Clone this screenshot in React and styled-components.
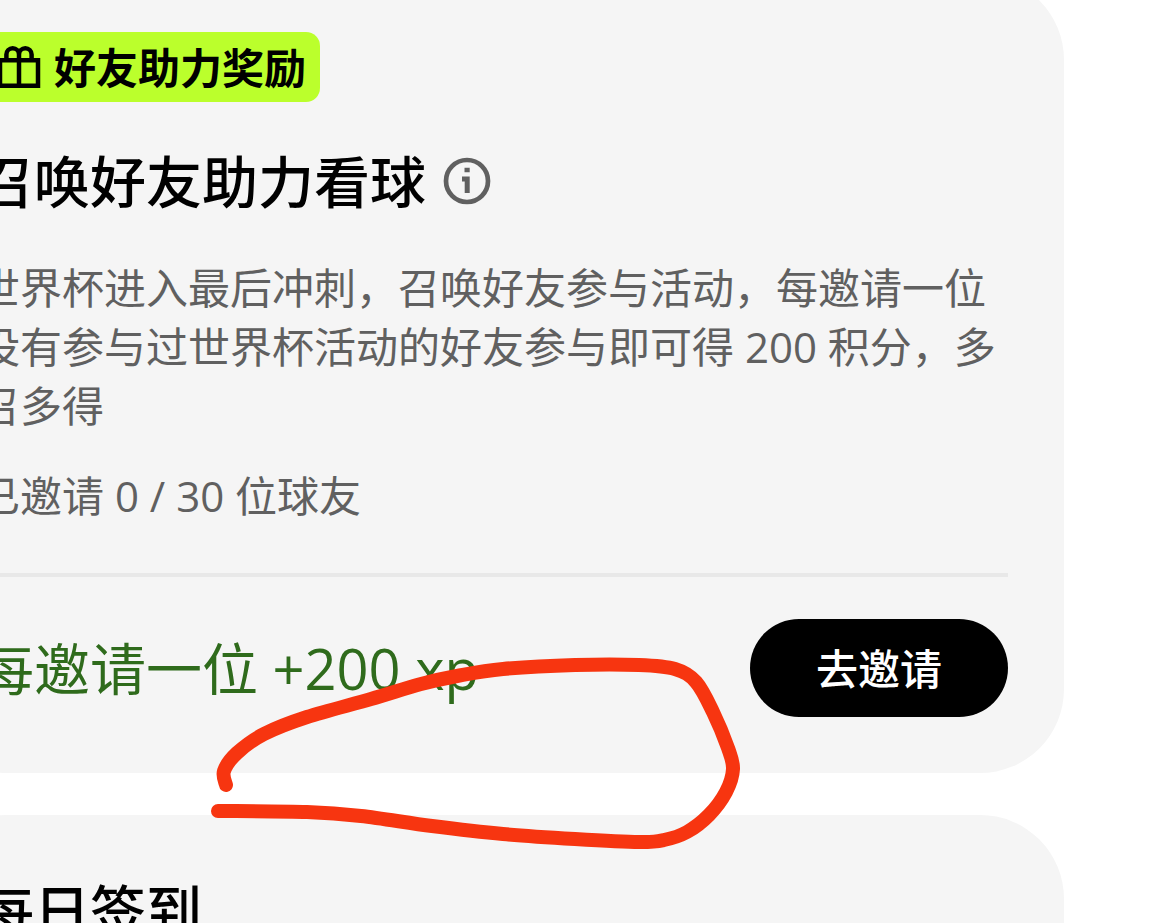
import React from 'react'
import styled, { createGlobalStyle } from 'styled-components'

const GlobalStyle = createGlobalStyle`
  body {
    margin: 0;
    background: #ffffff;
    font-family: 'Open Sans', 'Noto Sans CJK SC', sans-serif;
    overflow: hidden;
  }
`

const Page = styled.main`
  position: relative;
  height: 100vh;
  overflow: hidden;
`

const CardList = styled.div`
  display: flex;
  flex-direction: column;
  gap: 42px;
  margin: -24px 85px 0 -78px;
`

const Card = styled.section`
  padding: 56px;
  border-radius: 84px;
  background: #f5f5f5;
`

const Badge = styled.div`
  display: inline-flex;
  align-items: center;
  gap: 10px;
  height: 70px;
  padding: 0 14px;
  border-radius: 14px;
  background: #bbff2c;
  color: #000000;
  font-size: 42px;
  line-height: 59px;
  font-weight: 700;
  vertical-align: top;
`

const TitleRow = styled.div`
  display: flex;
  align-items: center;
  gap: 16px;
  margin-top: ${props => (props.$spaced ? '40px' : '0')};
`

const Title = styled.h2`
  margin: 0;
  font-size: 56px;
  line-height: 78px;
  font-weight: 500;
  color: #000000;
`

const InfoButton = styled.button`
  display: flex;
  padding: 0;
  border: 0;
  background: none;
  color: #606060;
  cursor: pointer;
`

const Text = styled.p`
  margin: ${props => props.$top}px 0 0;
  font-size: 42px;
  line-height: 59px;
  color: #606060;
`

const Footer = styled.div`
  display: flex;
  align-items: center;
  justify-content: space-between;
  margin-top: 48px;
  padding-top: 42px;
  border-top: 4px solid #e8e8e8;
`

const Reward = styled.span`
  font-size: 56px;
  line-height: 78px;
  color: #2f6b1c;
`

const InviteButton = styled.button`
  height: 98px;
  padding: 0 66px;
  border: 0;
  border-radius: 49px;
  background: #000000;
  color: #ffffff;
  font-family: inherit;
  font-size: 42px;
  line-height: 59px;
  font-weight: 500;
  cursor: pointer;
`

const Marker = styled.svg`
  position: absolute;
  top: 0;
  left: 0;
  pointer-events: none;
`

const strokePoints = [
  [226, 785], [224, 771], [237, 753], [264, 734], [307, 717], [371, 699],
  [421, 684], [457, 676], [503, 669], [575, 665], [639, 665], [675, 669],
  [696, 682], [713, 712], [728, 748], [733, 769], [726, 792], [709, 815],
  [687, 832], [664, 840], [639, 842], [575, 839], [503, 834], [432, 826],
  [361, 816], [307, 812], [218, 811],
]

// smooth curve through every point
function toPath(points) {
  let d = `M${points[0].join(' ')}`
  for (let i = 0; i < points.length - 1; i++) {
    const p0 = points[i - 1] || points[i]
    const p1 = points[i]
    const p2 = points[i + 1]
    const p3 = points[i + 2] || p2
    const c1 = [p1[0] + (p2[0] - p0[0]) / 6, p1[1] + (p2[1] - p0[1]) / 6]
    const c2 = [p2[0] - (p3[0] - p1[0]) / 6, p2[1] - (p3[1] - p1[1]) / 6]
    d += `C${c1.join(' ')} ${c2.join(' ')} ${p2.join(' ')}`
  }
  return d
}

function GiftIcon() {
  return (
    <svg width="52" height="52" viewBox="0 0 52 52" fill="none" stroke="currentColor" strokeWidth="4.5" aria-hidden="true">
      <path d="M8 19.2H46V44.7H8ZM27 18V45" />
      <path d="M14.4 19V13.5A6.3 6.3 0 0 1 27 13.5V19M27 19V13.5A6.3 6.3 0 0 1 39.6 13.5V19" />
    </svg>
  )
}

function InfoIcon() {
  return (
    <svg width="50" height="50" viewBox="0 0 50 50" fill="none" stroke="currentColor" aria-hidden="true">
      <circle cx="25" cy="25" r="21" strokeWidth="4.7" />
      <path d="M20 23H25.2V37" strokeWidth="5" />
      <path d="M22.5 14H27.7" strokeWidth="4.5" />
    </svg>
  )
}

function App() {
  return (
    <>
      <GlobalStyle />
      <Page>
        <CardList>
          <Card>
            <Badge>
              <GiftIcon />
              好友助力奖励
            </Badge>
            <TitleRow $spaced>
              <Title>召唤好友助力看球</Title>
              <InfoButton type="button" aria-label="活动说明">
                <InfoIcon />
              </InfoButton>
            </TitleRow>
            <Text $top={38}>
              世界杯进入最后冲刺，召唤好友参与活动，每邀请一位没有参与过世界杯活动的好友参与即可得 200 积分，多召多得
            </Text>
            <Text $top={31}>已邀请 0 / 30 位球友</Text>
            <Footer>
              <Reward>每邀请一位 +200 xp</Reward>
              <InviteButton type="button">去邀请</InviteButton>
            </Footer>
          </Card>
          <Card>
            <TitleRow>
              <Title>每日签到</Title>
            </TitleRow>
          </Card>
        </CardList>
        <Marker width="760" height="870" viewBox="0 0 760 870" fill="none" aria-hidden="true">
          <path d={toPath(strokePoints)} stroke="#f73510" strokeWidth="14" strokeLinecap="round" strokeLinejoin="round" />
        </Marker>
      </Page>
    </>
  )
}

export default App
